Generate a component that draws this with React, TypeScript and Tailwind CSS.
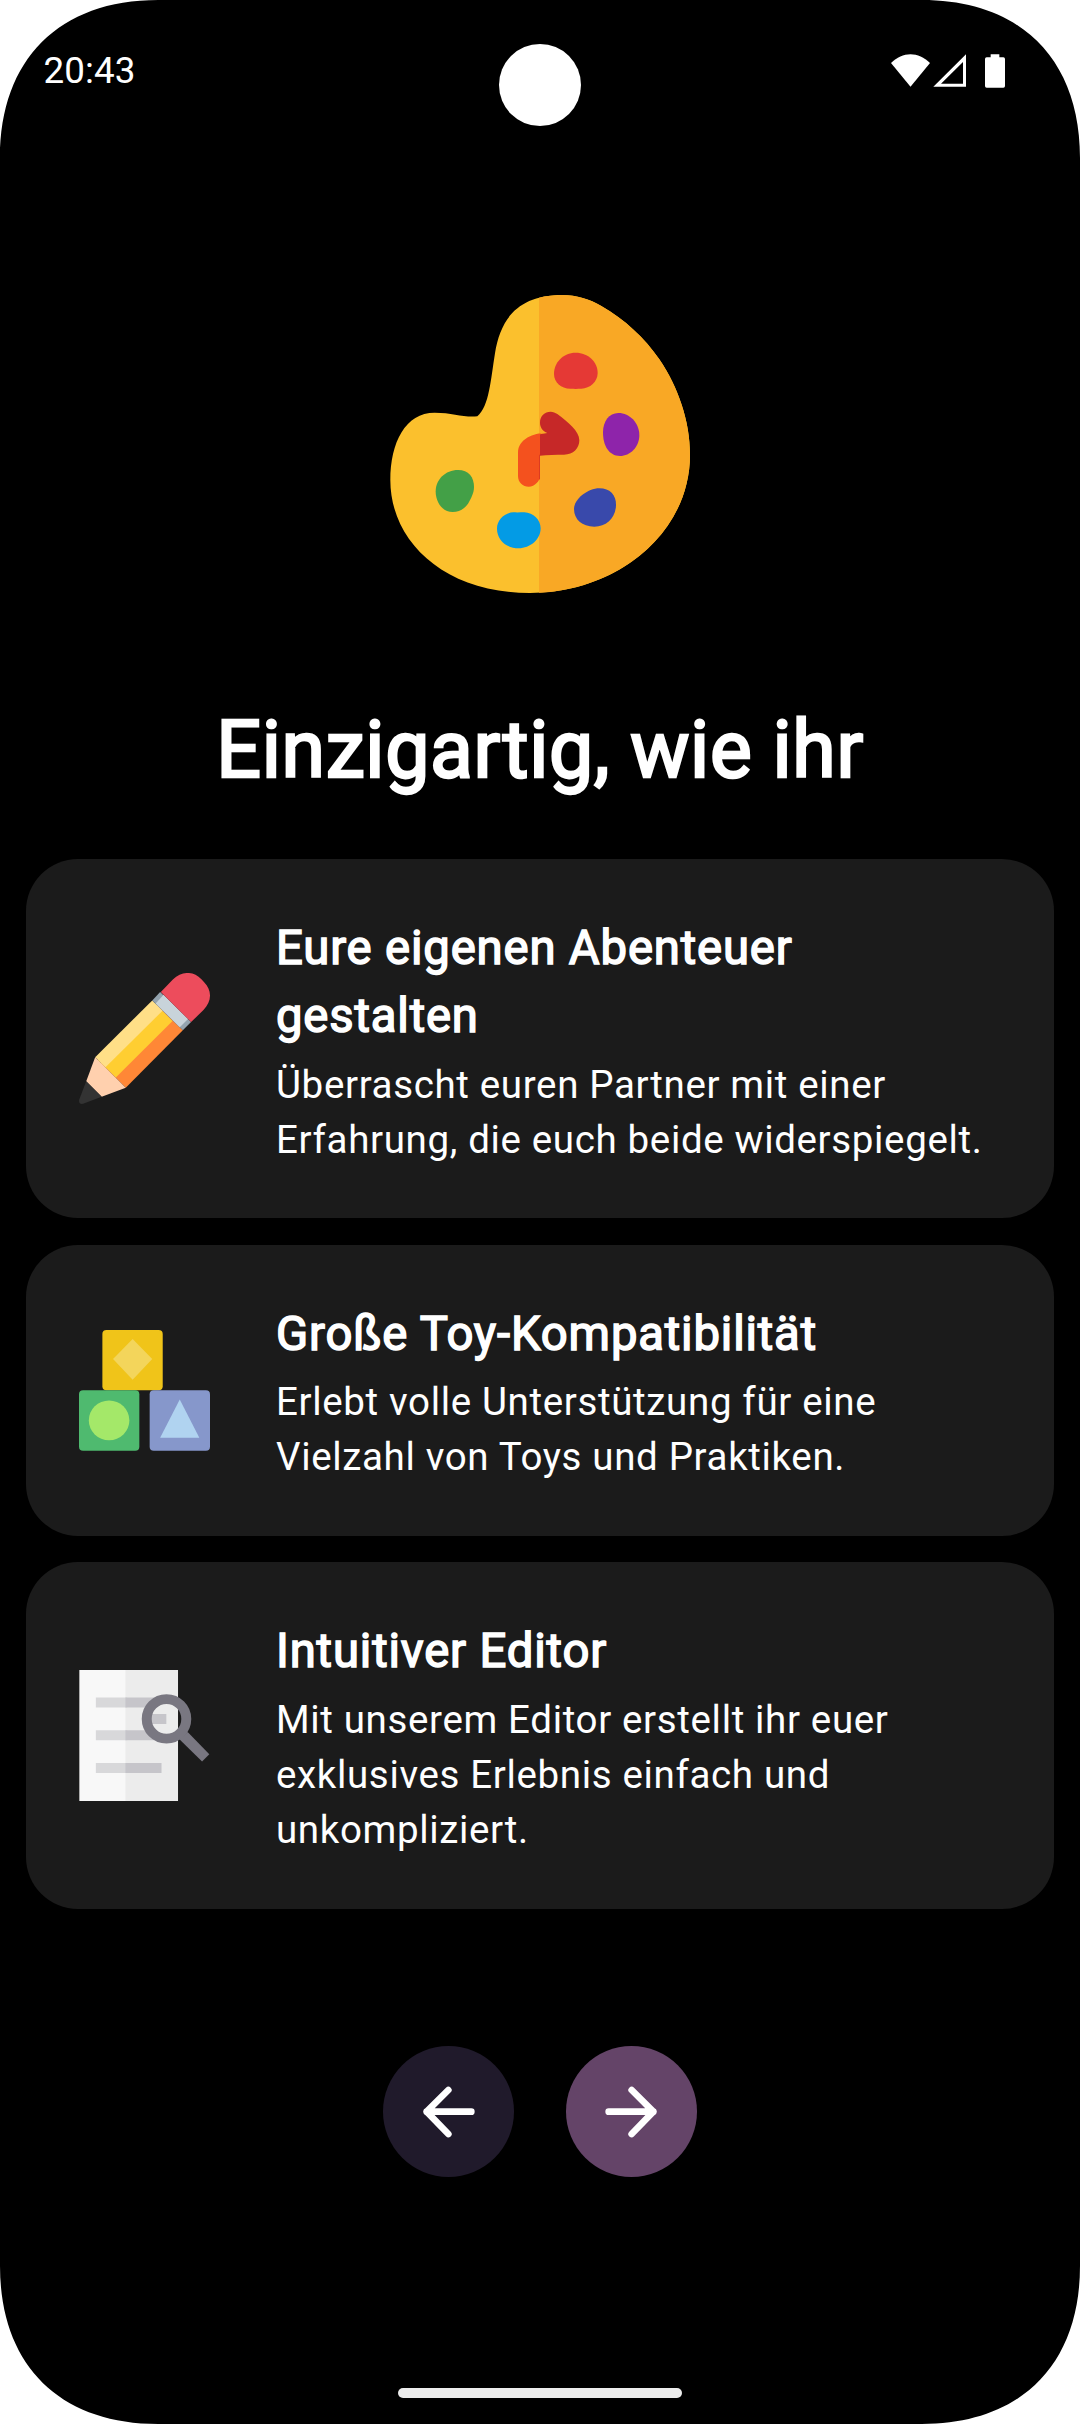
import type { ReactNode } from "react";

function Corner({ className }: { className: string }) {
  return (
    <svg className={`absolute size-[158px] ${className}`} viewBox="0 0 158 158" fill="#fff">
      <path d="M0 0H158C59.300 0 0 59.300 0 158Z" />
    </svg>
  );
}

function StatusIcons() {
  return (
    <svg className="h-[34px] w-[114px]" viewBox="63 42 342 102" fill="#fff">
      <path d="M63 69C98 34 145 34 180 69L121.500 140Z" />
      <path fillRule="evenodd" d="M190 140L288 43V140ZM213 131H279V66Z" />
      <path d="M362 43H388V52H400Q405 52 405 57V138Q405 143.500 400 143.500H350Q345 143.500 345 138V57Q345 52 350 52H362Z" />
    </svg>
  );
}

function Palette() {
  return (
    <svg className="h-[330px] w-[340px]" viewBox="0 0 1020 990">
      <defs>
        <clipPath id="right-half">
          <rect x="507" y="0" width="513" height="990" />
        </clipPath>
        <path
          id="board"
          d="M322 409C358 380 362 298 375 220C392 112 448 45 577 45C620 45 658 57 694 78C764 118 824 174 868 238C925 322 960 424 960 524C960 762 738 939 480 939C222 939 61 784 61 600C61 488 106 398 194 398C248 398 280 413 322 409Z"
        />
      </defs>
      <use href="#board" fill="#fbc02d" />
      <use href="#board" fill="#f9a825" clipPath="url(#right-half)" />
      <path fill="#e53935" d="M617 218C655 218 683 246 683 279C683 305 660 325 634 326.500C622 327 612 327 601 326.500C573 325 552 308 552 281C552 248 579 218 617 218Z" />
      <path fill="#8e24aa" d="M745 399C780 399 808 430 808 465C808 502 780 528 750 528C716 528 699 497 699 457C699 424 717 399 745 399Z" />
      <path fill="#3949ab" d="M688 625C720 625 738 645 738 674C738 712 710 740 673 740C636 740 612 718 612 687C612 657 654 625 688 625Z" />
      <path fill="#039be5" d="M430 697C442 698 452 697 463 697C490 698 512 720 512 745C512 778 481 805 446 805C408 805 381 778 381 746C381 720 404 698 430 697Z" />
      <path fill="#43a047" d="M264 570C296 570 312 592 312 621C312 639 303 655 294 671C285 685 268 696 248 696C217 696 197 667 197 634C197 599 226 570 264 570Z" />
      <path fill="#f4511e" d="M530 459C495 458 444 475 444 518V588C444 608 459 620 476 620C495 620 510 602 510 588V459Z" />
      <path fill="#c62828" d="M510 463L532 459C518 453 510 442 510 428C510 408 524 395 542 395C549 395 556 398 562 402C594 426 628 453 628 481C628 505 610 524 582 524C557 524 532 524 510 527Z" />
      <path fill="#dd3b20" d="M507 524H510V596L507 600Z" />
    </svg>
  );
}

function Pencil() {
  return (
    <svg className="size-[131px]" viewBox="200 398.500 381 394" preserveAspectRatio="none">
      <path fill="#ff8736" d="M426 494L502 571L336 744L264 670Z" />
      <path fill="#ffce31" d="M420 489L472 543L307 713L255 660Z" />
      <path fill="#ffdf87" d="M413 481L443 512L277 682L247 652Z" />
      <path fill="#94a4af" d="M436 456L526 546L502 571L413 481Z" />
      <path fill="#c8d3da" d="M446 464L517 537L493 562L423 490Z" />
      <path fill="#ed4c5c" d="M438 456L473 418C500 392 533 392 556 417L564 426C587 450 587 484 562 510L526 546Z" />
      <path fill="#ffd0ae" d="M247 652L336 744L266 771L221 724Z" />
      <path fill="#333333" d="M221 724L266 771L212 792C203 794 198 788 201 778Z" />
    </svg>
  );
}

function Blocks() {
  return (
    <svg className="size-[131px]" viewBox="200 284 381 394" preserveAspectRatio="none">
      <rect x="268" y="299" width="175.500" height="181" rx="12" fill="#f0c419" />
      <rect x="200" y="480" width="175.500" height="182" rx="12" fill="#4fba6f" />
      <rect x="405.500" y="480" width="175.500" height="182" rx="12" fill="#8697cb" />
      <path fill="#f3d55b" d="M356 326L413 386L356 449L299 386Z" />
      <ellipse cx="287.500" cy="571" rx="59" ry="60" fill="#a4e869" />
      <path fill="#b0d3f0" d="M493 508L550 623H436Z" />
    </svg>
  );
}

function DocumentSearch() {
  return (
    <svg className="size-[131px]" viewBox="200 389.500 381 394" preserveAspectRatio="none">
      <path fill="#f8f8f8" d="M201 389.500H400V783.500H201Z" />
      <path fill="#ececec" d="M335 389.500H488V783.500H335Z" />
      <path fill="#d8d8da" d="M249 472.500H340V502H249ZM249 571H340V601H249ZM249 669.500H340V699H249Z" />
      <path fill="#c6c5ca" d="M335 472.500H420V502H335ZM335 571H420V601H335ZM335 669.500H440V699H335ZM408 522H454V552H408Z" />
      <path fill="#797781" d="M516 576L579 643L558 665L492 598Z" />
      <ellipse cx="454.500" cy="536.500" rx="57.500" ry="59.500" fill="none" stroke="#797781" strokeWidth="29" />
    </svg>
  );
}

interface CardProps {
  icon: ReactNode;
  title: string;
  children: ReactNode;
  className: string;
  gap: string;
}

function Card({ icon, title, children, className, gap }: CardProps) {
  return (
    <section className={`flex rounded-[52px] bg-[#1b1b1b] pl-[53px] ${className}`}>
      <div className="shrink-0 self-center">{icon}</div>
      <div className="ml-[66px] w-[725px] pt-[55px]">
        <h2 className="text-[47.25px] leading-[68px] tracking-[0.84px] [-webkit-text-stroke:1.5px_white]">{title}</h2>
        <p className={`text-[38.5px] leading-[55px] tracking-[0.65px] ${gap}`}>{children}</p>
      </div>
    </section>
  );
}

function RoundButton({ label, className, children }: { label: string; className: string; children: ReactNode }) {
  return (
    <button aria-label={label} className={`flex size-[131px] items-center justify-center rounded-full ${className}`}>
      <svg className="size-[131px]" viewBox="0 0 393 393" fill="none" stroke="#fff" strokeWidth="20" strokeLinecap="round" strokeLinejoin="round">
        {children}
      </svg>
    </button>
  );
}

export default function App() {
  return (
    <div className="relative flex h-[2424px] w-[1080px] flex-col overflow-hidden bg-black font-['Roboto',sans-serif] text-white">
      <Corner className="top-0 left-0" />
      <Corner className="top-0 right-0 -scale-x-100" />
      <Corner className="bottom-0 left-0 -scale-y-100" />
      <Corner className="right-0 bottom-0 -scale-100" />
      <div className="absolute top-[44px] left-[499px] size-[82px] rounded-full bg-white" />

      <header className="flex h-[142px] shrink-0 items-start justify-between pt-[49px] pr-[75px] pl-[43.5px]">
        <span className="text-[36.75px] leading-[43px] tracking-[0.1px]">20:43</span>
        <div className="pt-[5px]">
          <StatusIcons />
        </div>
      </header>

      <main className="flex flex-col">
        <div className="flex h-[566px] justify-center pt-[138px]">
          <Palette />
        </div>
        <h1 className="h-[151px] text-center text-[78.75px] leading-[84px] tracking-[0.66px] [-webkit-text-stroke:2.5px_white]">
          Einzigartig, wie ihr
        </h1>
        <div className="flex flex-col gap-[26.500px] px-[26px]">
          <Card className="h-[359px]" gap="mt-[7px]" icon={<Pencil />} title="Eure eigenen Abenteuer gestalten">
            Überrascht euren Partner mit einer Erfahrung, die euch beide widerspiegelt.
          </Card>
          <Card className="h-[291px]" gap="mt-[6.5px]" icon={<Blocks />} title="Große Toy-Kompatibilität">
            Erlebt volle Unterstützung für eine Vielzahl von Toys und Praktiken.
          </Card>
          <Card className="h-[347px]" gap="mt-[7px]" icon={<DocumentSearch />} title="Intuitiver Editor">
            Mit unserem Editor erstellt ihr euer exklusives Erlebnis einfach und unkompliziert.
          </Card>
        </div>
        <nav className="mt-[137px] flex justify-center gap-[52px]">
          <RoundButton label="Zurück" className="bg-[#201a2b]">
            <path d="M265 197H131M196 132L131 197L196 264" />
          </RoundButton>
          <RoundButton label="Weiter" className="bg-[#644468]">
            <path d="M128 197H262M197 132L262 197L197 264" />
          </RoundButton>
        </nav>
      </main>

      <div className="mx-auto mt-auto mb-[26px] h-[10px] w-[284px] shrink-0 rounded-full bg-[#ececec]" />
    </div>
  );
}
